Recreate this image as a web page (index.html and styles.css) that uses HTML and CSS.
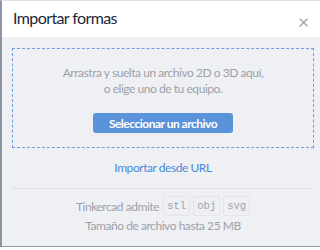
FILE: index.html
```html
<!DOCTYPE html>
<html lang="es">
<head>
    <meta charset="UTF-8">
    <meta name="viewport" content="width=device-width, initial-scale=1.0">
    <title>Importar formas</title>
    <link rel="stylesheet" href="styles.css">
</head>
<body>
    <div class="modal">
        <div class="modal-header">
            <h2 class="modal-title">Importar formas</h2>
            <span class="modal-close">&times;</span>
        </div>
        <div class="modal-body">
            <div class="drop-zone">
                <p class="drop-text">Arrastra y suelta un archivo 2D o 3D aquí,<br>o elige uno de tu equipo.</p>
                <button class="select-btn">Seleccionar un archivo</button>
            </div>
            <a class="url-link" href="#">Importar desde URL</a>
            <div class="divider"></div>
            <div class="formats">
                <span>Tinkercad admite</span>
                <code class="badge">stl</code>
                <code class="badge">obj</code>
                <code class="badge">svg</code>
            </div>
            <p class="size-note">Tamaño de archivo hasta 25 MB</p>
        </div>
    </div>
</body>
</html>
```

FILE: styles.css
```css
html, body {
    margin: 0;
    height: 100%;
    overflow: hidden;
    background-color: #ffffff;
}
body {
    font-family: Lato, 'Noto Sans', sans-serif;
    letter-spacing: -0.45px;
}
.modal {
    width: 324px;
    height: 247px;
    border-left: 2px solid #8b94a3;
    border-top: 1px solid #dcdfe4;
    border-bottom: 1px solid #8f98a5;
    background-color: #eff0f4;
    box-sizing: border-box;
}
.modal-header {
    display: flex;
    align-items: center;
    justify-content: space-between;
    height: 36px;
    padding: 0 15px 0 11px;
    background-color: #ffffff;
}
.modal-title {
    margin: 0;
    font-size: 16px;
    font-weight: 400;
    letter-spacing: -0.6px;
    color: #1c2738;
    padding-bottom: 3px;
}
.modal-close {
    font-size: 20px;
    color: #a3a7ae;
    line-height: 1;
    padding-top: 4px;
}
.modal-body {
    padding: 11px 10px 0 10px;
}
.drop-zone {
    height: 100px;
    border: 1.5px dashed #6f9be0;
    box-sizing: border-box;
    display: flex;
    flex-direction: column;
    align-items: center;
    padding-top: 16px;
}
.drop-text {
    margin: 0;
    font-size: 12px;
    line-height: 16px;
    color: #9da1a8;
    text-align: center;
}
.select-btn {
    margin-top: 16px;
    width: 140px;
    height: 20px;
    padding: 0;
    border: none;
    border-radius: 3px;
    background-color: #5b93db;
    color: #ffffff;
    font-family: inherit;
    font-size: 12px;
    font-weight: 700;
    letter-spacing: -0.5px;
}
.url-link {
    display: block;
    margin-top: 12px;
    text-align: center;
    font-size: 12px;
    line-height: 16px;
    color: #4a88d8;
    text-decoration: none;
}
.divider {
    height: 1px;
    margin-top: 12px;
    background-color: #dde0e5;
}
.formats {
    display: flex;
    justify-content: center;
    align-items: center;
    gap: 3px;
    margin-top: 7px;
    font-size: 12px;
    color: #9da1a8;
}
.formats span {
    margin-right: 1px;
}
.badge {
    display: inline-flex;
    align-items: center;
    justify-content: center;
    width: 27px;
    height: 20px;
    box-sizing: border-box;
    border: 1px solid #e3e5e9;
    border-radius: 2px;
    font-family: 'Liberation Mono', 'DejaVu Sans Mono', monospace;
    font-size: 10.5px;
    letter-spacing: 0;
    color: #a2a5ab;
}
.size-note {
    margin: 2px 0 0 0;
    text-align: center;
    font-size: 12px;
    line-height: 16px;
    color: #9da1a8;
}
```
